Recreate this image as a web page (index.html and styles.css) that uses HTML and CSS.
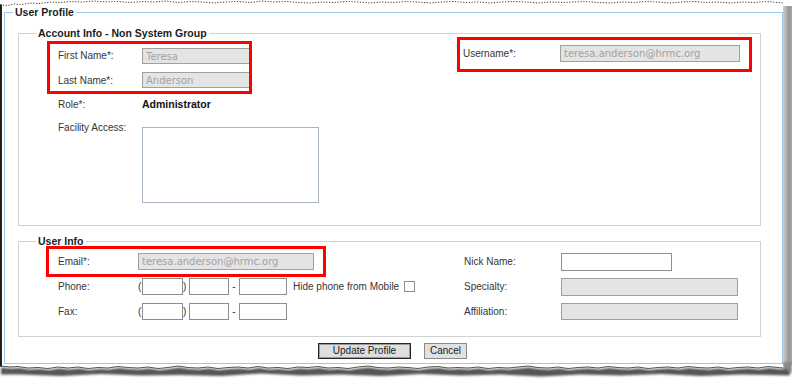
FILE: index.html
```html
<!DOCTYPE html>
<html>
<head>
<meta charset="utf-8">
<title>User Profile</title>
<link rel="stylesheet" href="styles.css">
</head>
<body>
<div class="paper">
  <svg class="tear-top" viewBox="0 0 792 6" width="792" height="6">
    <polyline points="0,5 8,5.5 14,4 22,4.5 30,3 40,3.5 50,2 60,2.5 70,1.5 82,2 94,1 106,2 118,1.5 130,2.5 142,1.5 154,2 166,1 178,2.5 190,1.5 202,2 214,3 226,2 238,1.5 250,2.5 262,1 274,2 286,1.5 298,2.5 310,3 322,2 334,2.5 346,1.5 358,2 370,3 382,2 394,2.5 406,1.5 418,2 430,3 442,2 454,1.5 466,2.5 478,2 490,3 502,2 514,1.5 526,2 538,3 550,2 562,2.5 574,2 586,1.5 598,2.5 610,3 622,2 634,2.5 646,1.5 658,2 670,3 682,2 694,1.5 706,2.5 718,2 730,3 742,2 754,2.5 766,1.5 778,2.5 784,3" fill="none" stroke="#222" stroke-width="0.9" stroke-dasharray="1.2 1.6"/>
    <rect x="0" y="4.5" width="2" height="2" fill="#222"/>
  </svg>
  <div class="body-row">
    <div class="sheet">
      <fieldset class="fs-outer">
        <legend>User Profile</legend>

        <fieldset class="fs-inner fs-acct">
          <legend>Account Info - Non System Group</legend>
          <div class="acct">
            <div class="acct-left">
              <label class="lbl lbl-r1">First Name*:</label>
              <input class="in ro in-name in-r1" value="Teresa" readonly>
              <label class="lbl">Last Name*:</label>
              <input class="in ro in-name" value="Anderson" readonly>
              <label class="lbl">Role*:</label>
              <span class="role">Administrator</span>
              <label class="lbl lbl-top">Facility Access:</label>
              <textarea class="facility"></textarea>
            </div>
            <div class="acct-right">
              <label class="lbl lbl-user">Username*:</label>
              <input class="in ro in-user" value="teresa.anderson@hrmc.org" readonly>
            </div>
          </div>
        </fieldset>

        <fieldset class="fs-inner fs-user">
          <legend>User Info</legend>
          <div class="ugrid">
            <label class="lbl">Email*:</label>
            <input class="in ro in-email" value="teresa.anderson@hrmc.org" readonly>
            <label class="lbl">Nick Name:</label>
            <input class="in in-nick">

            <label class="lbl">Phone:</label>
            <div class="phone">
              <span class="p-open">(</span><input class="in ph1"><span class="p-close">)</span><input class="in ph2"><span class="dash">-</span><input class="in ph3"><span class="hide">Hide phone from Mobile</span><input type="checkbox" class="chk">
            </div>
            <label class="lbl">Specialty:</label>
            <input class="in ro in-wide" readonly>

            <label class="lbl">Fax:</label>
            <div class="phone">
              <span class="p-open">(</span><input class="in ph1"><span class="p-close">)</span><input class="in ph2"><span class="dash">-</span><input class="in ph3">
            </div>
            <label class="lbl">Affiliation:</label>
            <input class="in ro in-wide in-aff" readonly>
          </div>
        </fieldset>

        <div class="actions">
          <button class="btn btn-primary" type="button">Update Profile</button>
          <button class="btn" type="button">Cancel</button>
        </div>
      </fieldset>
    </div>
    <div class="shadow-r"></div>
  </div>
  <svg class="tear-bottom" viewBox="0 0 792 14" width="792" height="14">
    <defs>
      <filter id="blur" x="-5%" y="-80%" width="110%" height="260%">
        <feGaussianBlur stdDeviation="1.1"/>
      </filter>
    </defs>
    <rect x="783" y="-3" width="9" height="10" fill="#8a8a8a" filter="url(#blur)"/>
    <polygon transform="translate(1,1.5)" filter="url(#blur)" fill="#555" points="0,1 10,2 18,1.5 28,3 38,2.5 48,3.5 58,2 68,3 78,2 88,3.5 98,2.5 108,3 118,1.5 128,2.5 138,3 148,2 158,3.5 168,2.5 178,1 188,2.5 198,3 208,2 218,3.5 228,2.5 238,2 248,3 258,1.5 268,3 278,2.5 288,3.5 298,2 308,2.5 318,1.5 328,3 338,2.5 348,3.5 358,2 368,1 378,2.5 388,3 398,2 408,2.5 418,3.5 428,2 438,1.5 448,3 458,2.5 468,3 478,2 488,3.5 498,2.5 508,3 518,2 528,1 538,2.5 548,3 558,2 568,3.5 578,2.5 588,2 598,3 608,1.5 618,2.5 628,3 638,2 648,3.5 658,2.5 668,2 678,3 688,1.5 698,2.5 708,3 718,2 728,3.5 738,2.5 748,2 758,3 768,1.5 778,2.5 786,3 790,6 788,9 740,8 700,9.5 660,7.5 620,9 580,8 540,10 500,8 460,9 420,7.5 380,9.5 340,8 300,9 260,7 220,9.5 180,8.5 140,9 100,7.5 60,9.5 20,8 0,8"/>
    <polygon fill="#fff" points="2,-1 2,1 10,2 18,1.5 28,3 38,2.5 48,3.5 58,2 68,3 78,2 88,3.5 98,2.5 108,3 118,1.5 128,2.5 138,3 148,2 158,3.5 168,2.5 178,1 188,2.5 198,3 208,2 218,3.5 228,2.5 238,2 248,3 258,1.5 268,3 278,2.5 288,3.5 298,2 308,2.5 318,1.5 328,3 338,2.5 348,3.5 358,2 368,1 378,2.5 388,3 398,2 408,2.5 418,3.5 428,2 438,1.5 448,3 458,2.5 468,3 478,2 488,3.5 498,2.5 508,3 518,2 528,1 538,2.5 548,3 558,2 568,3.5 578,2.5 588,2 598,3 608,1.5 618,2.5 628,3 638,2 648,3.5 658,2.5 668,2 678,3 688,1.5 698,2.5 708,3 718,2 728,3.5 738,2.5 748,2 758,3 768,1.5 778,2.5 783,3 783,-1"/>
    <rect x="0" y="-1" width="2" height="2.5" fill="#222"/>
    <polyline fill="none" stroke="#2a2a2a" stroke-width="0.8" points="0,1 10,2 18,1.5 28,3 38,2.5 48,3.5 58,2 68,3 78,2 88,3.5 98,2.5 108,3 118,1.5 128,2.5 138,3 148,2 158,3.5 168,2.5 178,1 188,2.5 198,3 208,2 218,3.5 228,2.5 238,2 248,3 258,1.5 268,3 278,2.5 288,3.5 298,2 308,2.5 318,1.5 328,3 338,2.5 348,3.5 358,2 368,1 378,2.5 388,3 398,2 408,2.5 418,3.5 428,2 438,1.5 448,3 458,2.5 468,3 478,2 488,3.5 498,2.5 508,3 518,2 528,1 538,2.5 548,3 558,2 568,3.5 578,2.5 588,2 598,3 608,1.5 618,2.5 628,3 638,2 648,3.5 658,2.5 668,2 678,3 688,1.5 698,2.5 708,3 718,2 728,3.5 738,2.5 748,2 758,3 768,1.5 778,2.5 783,3"/>
  </svg>

  <div class="mark mark-name"></div>
  <div class="mark mark-user"></div>
  <div class="mark mark-email"></div>
</div>
</body>
</html>
```

FILE: styles.css
```css
* { box-sizing: border-box; }

body {
  margin: 0;
  background: #fff;
  font-family: "Liberation Sans", Arial, sans-serif;
  font-size: 10px;
  color: #333;
}

.paper {
  position: relative;
  width: 792px;
  height: 379px;
  overflow: hidden;
  display: flex;
  flex-direction: column;
}

.tear-top, .tear-bottom {
  display: block;
  flex: none;
  overflow: visible;
}

.body-row {
  display: flex;
  height: 359px;
  flex: none;
}

.sheet {
  width: 783px;
  flex: none;
  border-left: 2px solid #222;
  padding-bottom: 1px;
  background: #fff;
}

.shadow-r {
  width: 9px;
  flex: none;
  background: linear-gradient(to right, #d2d2d2, #959595 65%, #a6a6a6);
}

fieldset {
  margin: 0;
  min-width: 0;
  border: 1px solid #d0d0d0;
}

legend {
  padding: 0 2px;
  font-weight: bold;
  font-size: 10.5px;
  line-height: 12px;
  color: #1c1c1c;
}

.fs-outer {
  margin-left: 2px;
  border-color: #9fc7ec;
  padding: 0 10px 4px 8px;
}

.fs-inner {
  margin: 9px 0 0 5px;
  width: 743px;
  border-color: #d2d2d2;
}

.fs-acct { padding: 6px 0 22px 17px; }
.fs-user { padding: 6px 0 16px 17px; }

.lbl {
  align-self: center;
  white-space: nowrap;
  line-height: 13px;
  color: #353535;
}

.in {
  display: block;
  margin: 0;
  height: 17px;
  padding: 0 3px;
  border: 1px solid #8e8e8e;
  background: #fff;
  font-family: "DejaVu Sans", Verdana, sans-serif;
  font-size: 10px;
  color: #a2a2a2;
  outline: none;
  border-radius: 0;
}

.ro {
  background: #e4e4e4;
  border-color: #a0a0a0;
}

/* Account info */
.acct {
  display: flex;
  padding-left: 22px;
}

.acct-left {
  width: 405px;
  display: grid;
  grid-template-columns: 84px 321px;
  grid-template-rows: 19px 16px 16px auto;
  row-gap: 8px;
}

.lbl-r1 { align-self: end; line-height: 16px; }
.in-r1 { align-self: end; }
.in-name { width: 109px; height: 16px; }

.role {
  align-self: center;
  font-weight: bold;
  font-size: 10.5px;
  color: #111;
}

.lbl-top { align-self: start; padding-top: 1px; }

.facility {
  display: block;
  margin: 7px 0 0 0;
  width: 177px;
  height: 76px;
  border: 1px solid #a9b5c2;
  resize: none;
  background: #fff;
  outline: none;
}

.acct-right {
  display: grid;
  grid-template-columns: 97px 180px;
  grid-template-rows: 17px;
  align-content: start;
}

.lbl-user { line-height: 17px; }
.in-user { width: 180px; }

/* User info */
.ugrid {
  margin-left: 22px;
  display: grid;
  grid-template-columns: 80px 326px 97px 177px;
  grid-template-rows: 17px 17px 17px;
  row-gap: 8px;
}

.in-email { width: 176px; }
.in-nick { width: 111px; height: 18px; }
.in-wide { width: 177px; height: 18px; }
.in-aff { height: 17px; }

.phone {
  display: flex;
  align-items: center;
  height: 17px;
}

.p-open { width: 4px; }
.p-close { width: 6px; }
.dash { width: 10px; text-align: center; }
.ph1 { width: 41px; }
.ph2 { width: 40px; }
.ph3 { width: 48px; }
.hide { margin-left: 6px; white-space: nowrap; color: #353535; }

.chk {
  -webkit-appearance: none;
  appearance: none;
  margin: 0 0 0 5px;
  width: 11px;
  height: 11px;
  border: 1px solid #8c8c8c;
  background: #fff;
}

/* Buttons */
.actions {
  margin-top: 6px;
  height: 16px;
  display: flex;
  justify-content: center;
  gap: 13px;
}

.btn {
  margin: 0;
  height: 16px;
  padding: 0;
  width: 43px;
  border: 1px solid #8a8a8a;
  background: #e1e1e1;
  font-family: "Liberation Sans", Arial, sans-serif;
  font-size: 10px;
  line-height: 14px;
  color: #222;
  border-radius: 0;
}

.btn-primary {
  width: 93px;
  border-color: #262626;
  box-shadow: inset 0 0 0 1px #9a9a9a;
  background: #dedede;
}

/* Red annotation boxes drawn over the form */
.mark {
  position: absolute;
  border: 3px solid #ff0000;
  pointer-events: none;
}

.mark-name { left: 47px; top: 41px; width: 205px; height: 53px; }
.mark-user { left: 457px; top: 37px; width: 295px; height: 35px; }
.mark-email { left: 46px; top: 246px; width: 280px; height: 31px; }
```
